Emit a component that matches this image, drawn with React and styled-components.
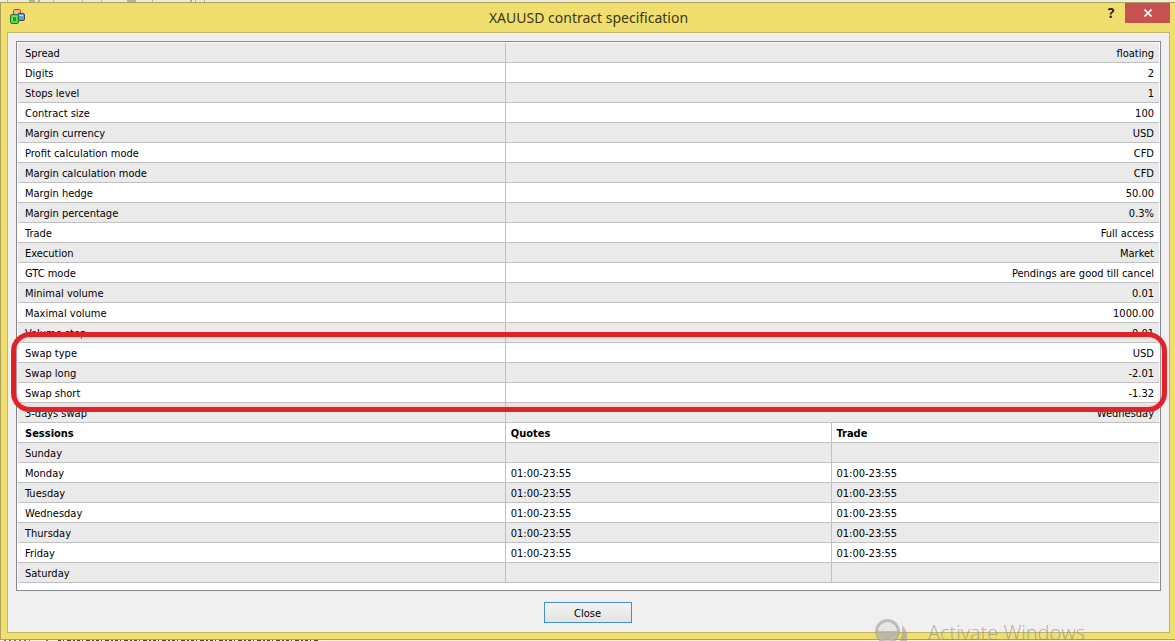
import styled, { createGlobalStyle } from 'styled-components';

const GlobalStyle = createGlobalStyle`
    body {
        margin: 0;
        background: #f0f0e4;
    }
`;

const Desktop = styled.div`
    position: relative;
    overflow: hidden;
    font-family: "DejaVu Sans Condensed", Tahoma, sans-serif;
    font-size: 11px;
    color: #000;
`;

const Strip = styled.svg`
    display: block;
    width: 100%;
    height: 2px;
    background: ${(props) => props.$background};
`;

const Window = styled.div`
    background: #f0de6f;
    border: 1px solid #aca05a;
    border-right: none;
    padding: 0 5px 6px 6px;
`;

const TitleBar = styled.header`
    display: grid;
    grid-template-columns: 1fr auto 1fr;
    align-items: start;
    height: 29px;
`;

const AppIcon = styled.svg`
    width: 17px;
    height: 17px;
    margin: 5px 0 0 2px;
`;

const Title = styled.h1`
    margin: 0;
    font-family: "Noto Sans", "Open Sans", sans-serif;
    font-size: 14px;
    font-weight: 400;
    line-height: 29px;
    color: #3c3618;
`;

const TitleButtons = styled.div`
    display: flex;
    justify-content: flex-end;
`;

const HelpButton = styled.button`
    width: 28px;
    height: 20px;
    padding: 0;
    border: none;
    background: transparent;
    font-family: "Noto Sans", "Open Sans", sans-serif;
    font-size: 14px;
    font-weight: 700;
    line-height: 20px;
    color: #29240c;
`;

const CloseButton = styled.button`
    display: flex;
    align-items: center;
    justify-content: center;
    width: 45px;
    height: 20px;
    padding: 0;
    border: none;
    background: #c75050;
`;

const Client = styled.main`
    padding: 8px;
    border: 1px solid #c0b568;
    background: #f0f0f0;
`;

const ListBox = styled.div`
    position: relative;
    padding: 1px 1px 7px;
    border: 1px solid #828790;
    background: #fff;
`;

const Table = styled.table`
    width: 100%;
    table-layout: fixed;
    border-collapse: separate;
    border-spacing: 0;
`;

const NameCol = styled.col`
    width: 42.75%;
`;

const QuotesCol = styled.col`
    width: 28.55%;
`;

const Row = styled.tr`
    background: ${(props) => props.$shaded ? '#eaeaea' : '#fff'};
`;

const Cell = styled.td`
    height: 17px;
    padding: 2px 5px 0;
    border-bottom: 1px solid #c0c0c0;
    border-right: 1px solid #c0c0c0;
    line-height: 17px;
    text-align: ${(props) => props.$right ? 'right' : 'left'};
    white-space: nowrap;

    &:first-child {
        padding-left: 7px;
    }

    &:last-child {
        border-right: none;
    }
`;

const Highlight = styled.div`
    position: absolute;
    top: 290px;
    left: -6px;
    right: -7px;
    height: 70px;
    border: 5px solid #de2329;
    border-radius: 19px;
    box-shadow: inset 0 0 2px 2px rgba(250, 190, 195, 0.4);
    pointer-events: none;
`;

const Footer = styled.footer`
    display: flex;
    justify-content: center;
    padding: 11px 0 1px;
`;

const DialogButton = styled.button`
    width: 88px;
    height: 21px;
    margin-right: 2px;
    padding: 1px 0 0;
    border: 1px solid #4a8fc4;
    background: linear-gradient(to bottom, #f2f2f2, #e4e4e4);
    font-family: inherit;
    font-size: 11px;
    color: #000;
`;

const Watermark = styled.div`
    position: absolute;
    right: 90px;
    bottom: -1px;
    display: flex;
    align-items: flex-end;
    gap: 20px;
    font-family: "Open Sans", "Noto Sans", sans-serif;
    font-size: 20px;
    font-weight: 300;
    line-height: 20px;
    color: rgba(140, 140, 140, 0.7);
    pointer-events: none;
`;

const properties = [
    ['Spread', 'floating'],
    ['Digits', '2'],
    ['Stops level', '1'],
    ['Contract size', '100'],
    ['Margin currency', 'USD'],
    ['Profit calculation mode', 'CFD'],
    ['Margin calculation mode', 'CFD'],
    ['Margin hedge', '50.00'],
    ['Margin percentage', '0.3%'],
    ['Trade', 'Full access'],
    ['Execution', 'Market'],
    ['GTC mode', 'Pendings are good till cancel'],
    ['Minimal volume', '0.01'],
    ['Maximal volume', '1000.00'],
    ['Volume step', '0.01'],
    ['Swap type', 'USD'],
    ['Swap long', '-2.01'],
    ['Swap short', '-1.32'],
    ['3-days swap', 'Wednesday'],
];

const hours = '01:00-23:55';

const sessions = [
    ['Sunday', '', ''],
    ['Monday', hours, hours],
    ['Tuesday', hours, hours],
    ['Wednesday', hours, hours],
    ['Thursday', hours, hours],
    ['Friday', hours, hours],
    ['Saturday', '', ''],
];

function SymbolIcon() {
    return (
        <AppIcon viewBox="0 0 17 17" aria-hidden="true">
            <rect x="4.5" y="1.5" width="7" height="6" rx="1" fill="#f3b49a" stroke="#b4472c" />
            <rect x="8.5" y="5.5" width="7" height="7" rx="1.5" fill="#5d9fd6" stroke="#3a4a58" />
            <path d="M10 7.5h4" stroke="#b8dcf4" />
            <rect x="1.5" y="6.5" width="8" height="9" rx="1.5" fill="#58d850" stroke="#1d7a22" />
            <rect x="4" y="9" width="3" height="4" fill="#1f9a2a" />
            <path d="M3 8.5h5M3.5 8v5" stroke="#7be373" fill="none" />
        </AppIcon>
    );
}

function SpecTable() {
    return (
        <Table>
            <colgroup>
                <NameCol />
                <QuotesCol />
                <col />
            </colgroup>
            <tbody>
                {properties.map(([name, value], i) => (
                    <Row key={name} $shaded={i % 2 === 0}>
                        <Cell>{name}</Cell>
                        <Cell colSpan={2} $right>{value}</Cell>
                    </Row>
                ))}
            </tbody>
            <tbody>
                <Row>
                    <Cell as="th">Sessions</Cell>
                    <Cell as="th">Quotes</Cell>
                    <Cell as="th">Trade</Cell>
                </Row>
                {sessions.map(([day, quotes, trade], i) => (
                    <Row key={day} $shaded={i % 2 === 0}>
                        <Cell>{day}</Cell>
                        <Cell>{quotes}</Cell>
                        <Cell>{trade}</Cell>
                    </Row>
                ))}
            </tbody>
        </Table>
    );
}

export default function App() {
    return (
        <Desktop>
            <GlobalStyle />
            <Strip $background="#efecda" aria-hidden="true">
                <path d="M7 1h1M29 1h6M38 1h2M53 1h1M82 1h1M101 1h1M127 1h9M152 1h1M190 1h2M195 1h1M204 1h1" stroke="#b4b1a2" strokeWidth="2" />
            </Strip>
            <Window>
                <TitleBar>
                    <SymbolIcon />
                    <Title>XAUUSD contract specification</Title>
                    <TitleButtons>
                        <HelpButton aria-label="Help">?</HelpButton>
                        <CloseButton aria-label="Close window">
                            <svg width="8" height="8" viewBox="0 0 8 8">
                                <path d="M0.5 0.5l7 7M7.5 0.5l-7 7" stroke="#fff" strokeWidth="1.6" />
                            </svg>
                        </CloseButton>
                    </TitleButtons>
                </TitleBar>
                <Client>
                    <ListBox>
                        <SpecTable />
                        <Highlight />
                    </ListBox>
                    <Footer>
                        <DialogButton>Close</DialogButton>
                    </Footer>
                </Client>
            </Window>
            <Strip $background="#f6f3dc" aria-hidden="true">
                <path d="M4 1h26M46 1h2" stroke="#77756a" strokeWidth="2" strokeDasharray="2 3" />
                <path d="M58 1h260" stroke="#4a483e" strokeWidth="2" strokeDasharray="3 2 1 3 4 2 2 2" />
            </Strip>
            <Watermark>
                <svg width="33" height="25" viewBox="0 0 33 25">
                    <circle cx="12.5" cy="13.5" r="11" fill="rgba(225, 225, 225, 0.6)" stroke="rgba(150, 150, 150, 0.55)" strokeWidth="3" />
                    <path d="M3 13h19a9.5 9.5 0 0 1-19 0z" fill="rgba(150, 150, 150, 0.55)" />
                    <path d="M27 7q6 6 5 14v4h-8q4-8 3-18z" fill="rgba(150, 150, 150, 0.55)" />
                </svg>
                <span>Activate Windows</span>
            </Watermark>
        </Desktop>
    );
}
